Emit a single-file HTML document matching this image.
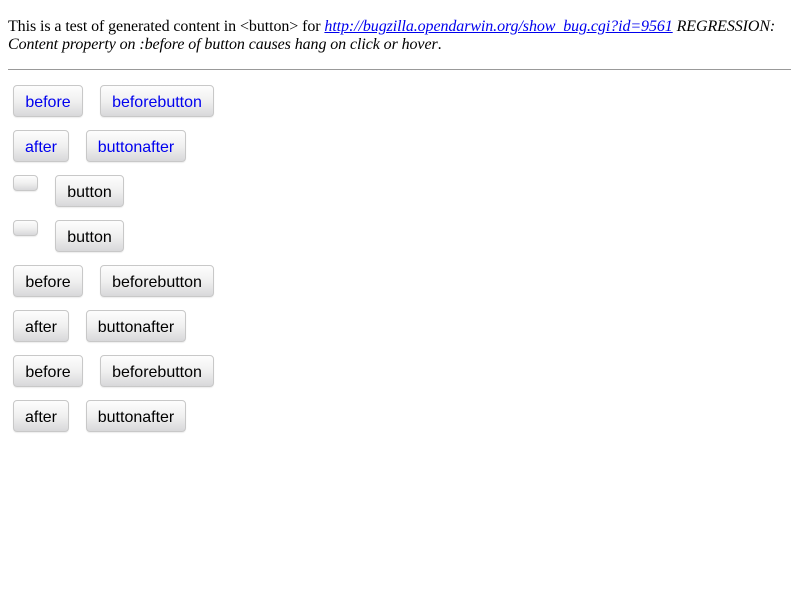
<!DOCTYPE html>
<html><head><style>
body{margin:0;background:#fff;}
p{position:absolute;left:8px;top:18px;margin:0;width:785px;font:16px/18px "Liberation Serif",serif;color:#000;letter-spacing:-0.09px;}
a{color:#00e;}
hr{position:absolute;left:8px;top:69px;width:783px;margin:0;border:0;border-top:1px solid #999;height:0;}
.b{position:absolute;height:30px;border:1px solid #c8c8c8;border-radius:4px;background:linear-gradient(#fdfdfd,#f0f0f0 50%,#d8d8da);box-shadow:0 1px 1px rgba(0,0,0,.08);font:16px/34px "Liberation Sans",sans-serif;text-align:center;color:#000;box-sizing:content-box;overflow:hidden;white-space:nowrap;}
.bl{color:#00e;}
.e{height:14px;}
</style></head><body>
<p>This is a test of generated content in &lt;button&gt; for <a href="#"><i>http://bugzilla.opendarwin.org/show_bug.cgi?id=9561</i></a> <i>REGRESSION: Content property on :before of button causes hang on click or hover</i>.</p>
<hr>
<div class="b bl" style="left:13px;top:85px;width:68px">before</div>
<div class="b bl" style="left:100px;top:85px;width:112px">beforebutton</div>
<div class="b bl" style="left:13px;top:130px;width:54px">after</div>
<div class="b bl" style="left:86px;top:130px;width:98px">buttonafter</div>
<div class="b e" style="left:13px;top:175px;width:23px"></div>
<div class="b" style="left:55px;top:175px;width:67px">button</div>
<div class="b e" style="left:13px;top:220px;width:23px"></div>
<div class="b" style="left:55px;top:220px;width:67px">button</div>
<div class="b" style="left:13px;top:265px;width:68px">before</div>
<div class="b" style="left:100px;top:265px;width:112px">beforebutton</div>
<div class="b" style="left:13px;top:310px;width:54px">after</div>
<div class="b" style="left:86px;top:310px;width:98px">buttonafter</div>
<div class="b" style="left:13px;top:355px;width:68px">before</div>
<div class="b" style="left:100px;top:355px;width:112px">beforebutton</div>
<div class="b" style="left:13px;top:400px;width:54px">after</div>
<div class="b" style="left:86px;top:400px;width:98px">buttonafter</div>
</body></html>
